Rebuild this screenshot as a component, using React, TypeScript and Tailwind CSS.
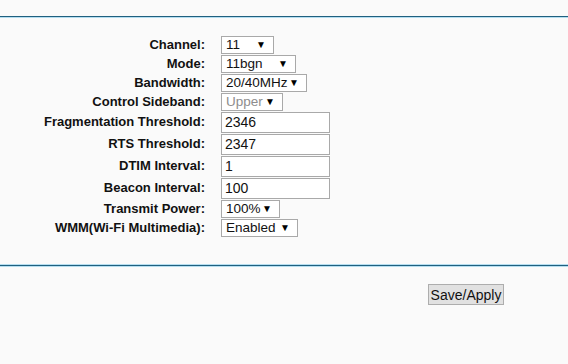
import React from 'react';

type Row =
  | { label: string; kind: 'select'; value: string; width: number; disabled?: boolean }
  | { label: string; kind: 'input'; value: string };

const rows: Row[] = [
  { label: 'Channel:', kind: 'select', value: '11', width: 53 },
  { label: 'Mode:', kind: 'select', value: '11bgn', width: 75 },
  { label: 'Bandwidth:', kind: 'select', value: '20/40MHz', width: 86 },
  { label: 'Control Sideband:', kind: 'select', value: 'Upper', width: 62, disabled: true },
  { label: 'Fragmentation Threshold:', kind: 'input', value: '2346' },
  { label: 'RTS Threshold:', kind: 'input', value: '2347' },
  { label: 'DTIM Interval:', kind: 'input', value: '1' },
  { label: 'Beacon Interval:', kind: 'input', value: '100' },
  { label: 'Transmit Power:', kind: 'select', value: '100%', width: 59 },
  { label: 'WMM(Wi-Fi Multimedia):', kind: 'select', value: 'Enabled', width: 77 },
];

function FakeSelect({ value, width, disabled }: { value: string; width: number; disabled?: boolean }) {
  return (
    <div
      className="relative flex items-center h-[18px] border border-[#a9a9a9] bg-white pl-[4px] text-[13.5px] leading-none"
      style={{ width }}
    >
      <span className={disabled ? 'text-[#8d8d8d]' : 'text-[#111]'}>{value}</span>
      <span className="absolute right-[7px] top-[3px] text-[10px] leading-none text-black">▼</span>
    </div>
  );
}

function TextBox({ value }: { value: string }) {
  return (
    <div className="flex items-center w-[109px] h-[21px] border border-[#a9a9a9] bg-white pl-[3px] text-[14px] text-[#111] leading-none">
      {value}
    </div>
  );
}

export default function App() {
  return (
    <div className="w-[568px] h-[364px] bg-[#fafafa] font-['Liberation_Sans',Arial,sans-serif] overflow-hidden">
      <div className="h-[16px]" />
      <div className="h-px bg-[#20607f]" />
      <div className="h-px bg-[#b5def0]" />

      <div className="flex flex-col pt-[17px]">
        {rows.map((r) => (
          <div
            key={r.label}
            className={`flex items-center ${r.kind === 'input' ? 'h-[22px]' : 'h-[19px]'}`}
          >
            <div className="w-[205px] text-right text-[13px] font-bold text-[#111]">{r.label}</div>
            <div className="ml-[16px]">
              {r.kind === 'select' ? (
                <FakeSelect value={r.value} width={r.width} disabled={r.disabled} />
              ) : (
                <TextBox value={r.value} />
              )}
            </div>
          </div>
        ))}
      </div>

      <div className="h-[27px]" />
      <div className="h-px bg-[#b5def0]" />
      <div className="h-px bg-[#20607f]" />
      <div className="h-px bg-[#b5def0]" />

      <div className="flex pt-[17px] pl-[428px]">
        <button className="w-[76px] h-[21px] border border-[#adadad] bg-[#e1e1e1] text-[14px] text-[#111] leading-none">
          Save/Apply
        </button>
      </div>
    </div>
  );
}
